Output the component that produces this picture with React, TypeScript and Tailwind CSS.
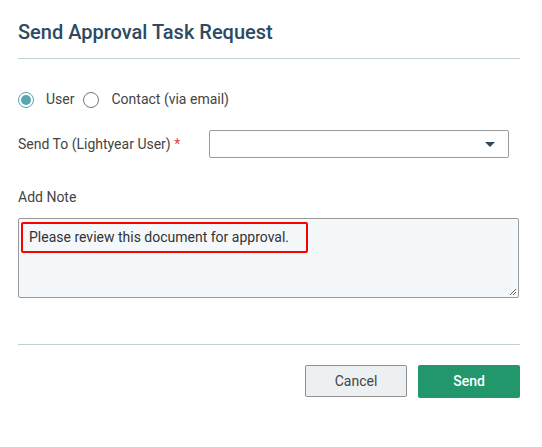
export default function App() {
  return (
    <div className="h-[447px] w-[542px] bg-white font-['Roboto',sans-serif]">
      <div className="px-[18px] pt-[19px]">
        <h1 className="text-[20px] font-medium leading-[26px] text-[#2d4a62]">
          Send Approval Task Request
        </h1>
        <div className="mr-[4px] mt-[13px] h-px bg-[#bfd0d6]" />

        <div className="mt-[30px] flex items-center text-[14px] text-[#444]">
          <span className="flex h-[16px] w-[16px] items-center justify-center rounded-full border border-[#5aa6b0]">
            <span className="h-[10px] w-[10px] rounded-full bg-[#5aa6b0]" />
          </span>
          <span className="ml-[12px]">User</span>
          <span className="ml-[9px] h-[16px] w-[16px] rounded-full border border-[#777]" />
          <span className="ml-[12px]">Contact (via email)</span>
        </div>

        <div className="mt-[20px] flex items-center">
          <div className="w-[191px] text-[14px] text-[#444]">
            Send To (Lightyear User) <span className="text-[#e0434f]">*</span>
          </div>
          <div className="flex h-[28px] w-[300px] items-center justify-end rounded-[2px] border border-[#9a9a9a] pr-[13px]">
            <svg width="10" height="5" viewBox="0 0 10 5">
              <path d="M0 0h10L5 5z" fill="#2d4a62" />
            </svg>
          </div>
        </div>

        <div className="mt-[30px] text-[14px] leading-[18px] text-[#444]">Add Note</div>

        <div className="relative mr-[5px] mt-[12px] h-[80px] rounded-[2px] border border-[#9a9a9a] bg-[#f5f8fb]">
          <div className="absolute left-[2px] top-[3px] flex h-[31px] w-[287px] items-center rounded-[2px] border-2 border-[#ff0000] pl-[6px] text-[14px] text-[#333]">
            Please review this document for approval.
          </div>
          <svg className="absolute bottom-[1px] right-[1px]" width="8" height="8" viewBox="0 0 8 8">
            <path d="M7 1L1 7M7 4L4 7" stroke="#666" strokeWidth="1" />
          </svg>
        </div>

        <div className="mr-[4px] mt-[46px] h-px bg-[#bfd0d6]" />

        <div className="mr-[4px] mt-[20px] flex justify-end gap-[11px]">
          <button className="h-[32px] w-[102px] rounded-[2px] border border-[#8f8f8f] bg-[#ecf0f3] text-[14px] text-[#444]">
            Cancel
          </button>
          <button className="h-[33px] w-[102px] rounded-[2px] bg-[#21976b] text-[14px] font-medium text-white">
            Send
          </button>
        </div>
      </div>
    </div>
  );
}
